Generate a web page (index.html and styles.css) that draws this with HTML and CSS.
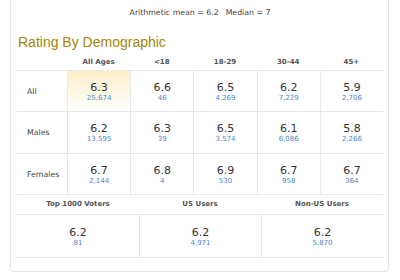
FILE: index.html
```html
<!DOCTYPE html>
<html>
<head>
<meta charset="utf-8">
<link rel="stylesheet" href="styles.css">
</head>
<body>
<div class="panel">
  <div class="summary"><span>Arithmetic mean = 6.2</span><span class="median">Median = 7</span></div>
  <h2 class="title">Rating By Demographic</h2>
  <div class="demo">
    <div class="hd"></div>
    <div class="hd">All Ages</div>
    <div class="hd">&lt;18</div>
    <div class="hd">18-29</div>
    <div class="hd">30-44</div>
    <div class="hd">45+</div>

    <div class="lbl">All</div>
    <div class="cell hi"><span class="val">6.3</span><span class="cnt">25,674</span></div>
    <div class="cell"><span class="val">6.6</span><span class="cnt">46</span></div>
    <div class="cell"><span class="val">6.5</span><span class="cnt">4,269</span></div>
    <div class="cell"><span class="val">6.2</span><span class="cnt">7,229</span></div>
    <div class="cell"><span class="val">5.9</span><span class="cnt">2,706</span></div>

    <div class="lbl">Males</div>
    <div class="cell"><span class="val">6.2</span><span class="cnt">13,595</span></div>
    <div class="cell"><span class="val">6.3</span><span class="cnt">39</span></div>
    <div class="cell"><span class="val">6.5</span><span class="cnt">3,574</span></div>
    <div class="cell"><span class="val">6.1</span><span class="cnt">6,086</span></div>
    <div class="cell"><span class="val">5.8</span><span class="cnt">2,266</span></div>

    <div class="lbl">Females</div>
    <div class="cell"><span class="val">6.7</span><span class="cnt">2,144</span></div>
    <div class="cell"><span class="val">6.8</span><span class="cnt">4</span></div>
    <div class="cell"><span class="val">6.9</span><span class="cnt">530</span></div>
    <div class="cell"><span class="val">6.7</span><span class="cnt">958</span></div>
    <div class="cell"><span class="val">6.7</span><span class="cnt">364</span></div>
  </div>
  <div class="groups">
    <div class="hd">Top 1000 Voters</div>
    <div class="hd">US Users</div>
    <div class="hd">Non-US Users</div>
    <div class="cell first"><span class="val">6.2</span><span class="cnt">81</span></div>
    <div class="cell"><span class="val">6.2</span><span class="cnt">4,971</span></div>
    <div class="cell"><span class="val">6.2</span><span class="cnt">5,870</span></div>
  </div>
</div>
</body>
</html>
```

FILE: styles.css
```css
* { box-sizing: border-box; }
html, body { margin: 0; padding: 0; background: #fff; }
body { font-family: "DejaVu Sans", Verdana, sans-serif; color: #333; }

.panel {
  margin-left: 10px;
  width: 379px;
  border: 1px solid #e6e6e6;
  border-top: 0;
  border-radius: 0 0 4px 4px;
  padding: 8px 5px 13px 6px;
}

.summary {
  display: flex;
  justify-content: center;
  font-size: 7.8px;
  line-height: 10px;
  color: #444;
}
.median { margin-left: 7px; }

.title {
  margin: 16px 0 5px 1px;
  font-family: Arial, "Liberation Sans", sans-serif;
  font-weight: normal;
  font-size: 14px;
  line-height: 16px;
  color: #a58500;
}

.demo {
  display: grid;
  grid-template-columns: 50px repeat(5, 1fr);
  grid-template-rows: 16px 41px 42px 41px;
}

.groups {
  display: grid;
  grid-template-columns: repeat(3, 1fr);
  grid-template-rows: 20px 43px;
}

.hd {
  display: flex;
  align-items: center;
  justify-content: center;
  border-bottom: 1px solid #e8e8e8;
  font-weight: bold;
  font-size: 7px;
  color: #555;
  padding-bottom: 1px;
}

.lbl {
  display: flex;
  align-items: center;
  padding-left: 10px;
  border-bottom: 1px solid #e8e8e8;
  font-size: 7.8px;
  color: #444;
}

.cell {
  display: flex;
  flex-direction: column;
  align-items: center;
  padding-top: 11px;
  border-left: 1px solid #e8e8e8;
  border-bottom: 1px solid #e8e8e8;
}
.groups .cell { padding-top: 12px; }
.groups .cell.first { border-left: 0; }

.hi { background: linear-gradient(#fcefc8, #fff); }

.val {
  font-size: 11px;
  line-height: 12px;
  color: #333;
}
.cnt {
  font-size: 7px;
  line-height: 9px;
  color: #4a86c8;
}
```
